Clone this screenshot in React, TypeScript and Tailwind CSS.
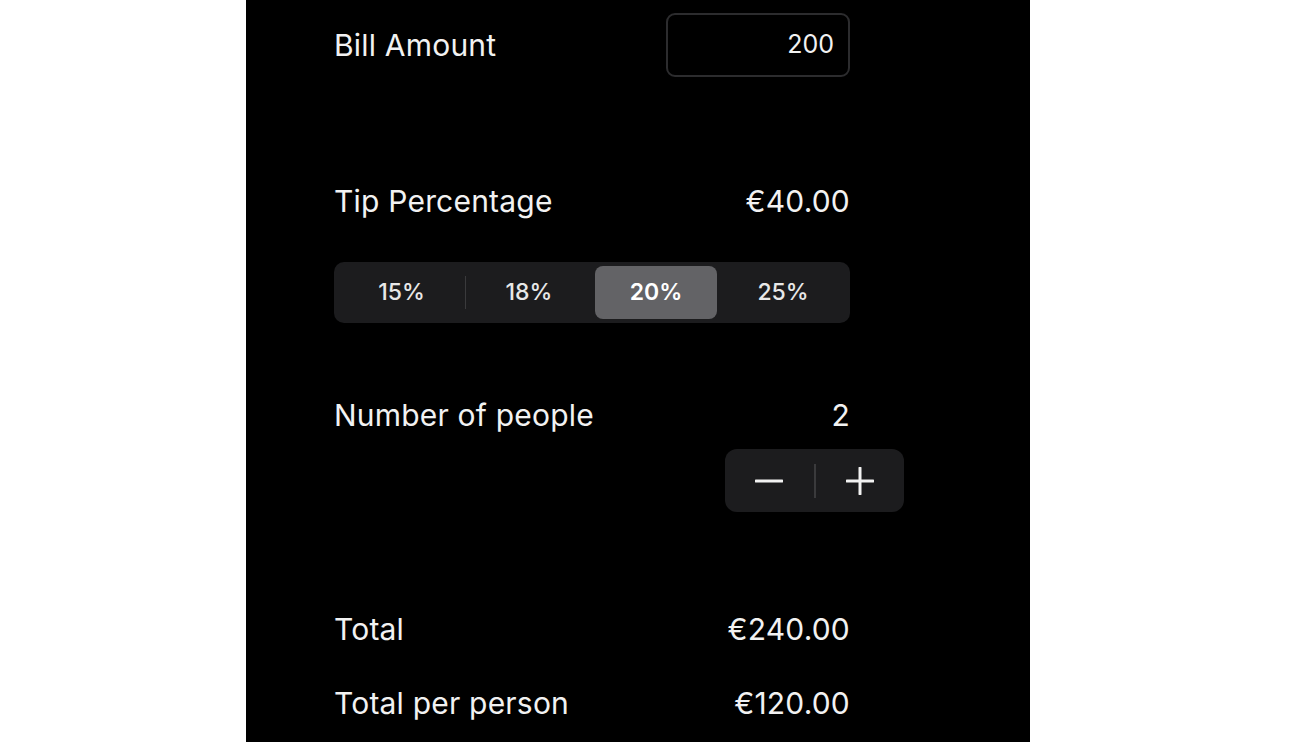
import React from 'react';

const font = { fontFamily: 'Inter, "Noto Sans", sans-serif' };

function Row({ label, value }: { label: string; value: string }) {
  return (
    <div className="flex items-center justify-between h-[36px] text-[30px] leading-[36px] tracking-[0.2px] text-[#f2f2f2]">
      <span>{label}</span>
      <span>{value}</span>
    </div>
  );
}

export default function App() {
  const tips = ['15%', '18%', '20%', '25%'];
  const selected = 2;

  return (
    <div className="w-[1297px] h-[742px] bg-white overflow-hidden" style={font}>
      <div className="ml-[246px] w-[784px] h-[742px] bg-black">
        <div className="ml-[88px] w-[516px] pt-[13px] flex flex-col">
          {/* Bill amount */}
          <div className="flex items-center justify-between h-[64px] text-[30px] tracking-[0.2px] text-[#f2f2f2]">
            <span>Bill Amount</span>
            <div className="w-[184px] h-[64px] rounded-[9px] border-2 border-[#2c2c2e] flex items-center justify-end pr-[14px] text-[25px] tracking-normal">
              200
            </div>
          </div>

          {/* Tip */}
          <div className="mt-[106px]">
            <Row label="Tip Percentage" value="€40.00" />
          </div>

          <div className="mt-[43px] h-[61px] rounded-[10px] bg-[#1c1c1e] p-[4px] flex items-stretch">
            {tips.map((t, i) => {
              const showDivider = i > 0 && i !== selected && i - 1 !== selected;
              return (
                <div key={t} className="flex-1 flex items-stretch">
                  {i > 0 && (
                    <div className={`w-px self-center h-[33px] ${showDivider ? 'bg-[#3a3a3c]' : 'bg-transparent'}`} />
                  )}
                  <div
                    className={`flex-1 flex items-center justify-center rounded-[8px] text-[23px] ${
                      i === selected ? 'bg-[#636366] font-semibold text-white mx-[2px]' : 'font-medium text-[#e8e8e8]'
                    }`}
                  >
                    {t}
                  </div>
                </div>
              );
            })}
          </div>

          {/* People */}
          <div className="mt-[74px]">
            <Row label="Number of people" value="2" />
          </div>

          <div className="mt-[16px] ml-[391px] w-[179px] h-[63px] rounded-[12px] bg-[#1c1c1e] flex items-center">
            <div className="flex-1 flex items-center justify-center">
              <svg width="28" height="28" viewBox="0 0 28 28">
                <line x1="1" y1="14" x2="27" y2="14" stroke="#f2f2f2" strokeWidth="3" strokeLinecap="round" />
              </svg>
            </div>
            <div className="w-[2px] h-[34px] bg-[#3a3a3c]" />
            <div className="flex-1 flex items-center justify-center">
              <svg width="28" height="28" viewBox="0 0 28 28">
                <line x1="1" y1="14" x2="27" y2="14" stroke="#f2f2f2" strokeWidth="3" strokeLinecap="round" />
                <line x1="14" y1="1" x2="14" y2="27" stroke="#f2f2f2" strokeWidth="3" strokeLinecap="round" />
              </svg>
            </div>
          </div>

          {/* Totals */}
          <div className="mt-[99px]">
            <Row label="Total" value="€240.00" />
          </div>
          <div className="mt-[38px]">
            <Row label="Total per person" value="€120.00" />
          </div>
        </div>
      </div>
    </div>
  );
}
